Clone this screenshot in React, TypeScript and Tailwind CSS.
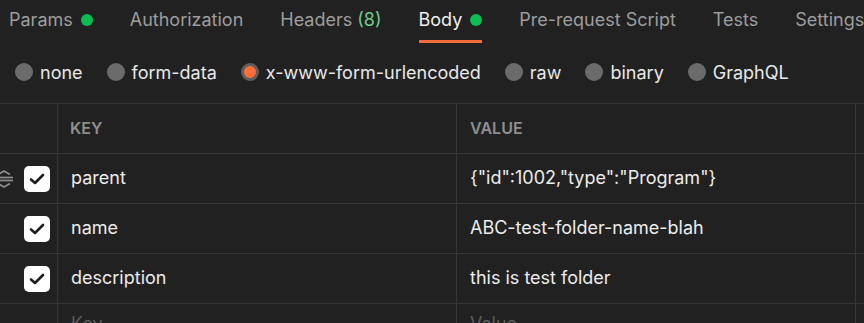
import { Fragment } from "react";

type Tab = {
  label: string;
  count?: string;
  dot?: boolean;
  active?: boolean;
};

const tabs: Tab[] = [
  { label: "Params", dot: true },
  { label: "Authorization" },
  { label: "Headers", count: "(8)" },
  { label: "Body", dot: true, active: true },
  { label: "Pre-request Script" },
  { label: "Tests" },
  { label: "Settings" },
];

const bodyTypes = ["none", "form-data", "x-www-form-urlencoded", "raw", "binary", "GraphQL"];

const rows = [
  { key: "parent", value: '{"id":1002,"type":"Program"}', handle: true },
  { key: "name", value: "ABC-test-folder-name-blah" },
  { key: "description", value: "this is test folder" },
];

function DragHandle() {
  return (
    <svg width="20" height="20" viewBox="0 0 20 20" className="absolute left-[-6px] top-1/2 -translate-y-1/2" fill="none" stroke="#8a8a8a" strokeWidth="1.8">
      <path d="M4 5.5 L10 2 L16 5.5" />
      <path d="M2 8.5 H19" />
      <path d="M2 11.5 H19" />
      <path d="M4 14.5 L10 18 L16 14.5" />
    </svg>
  );
}

function Checkbox() {
  return (
    <div className="flex h-[26px] w-[26px] items-center justify-center rounded-[5px] bg-white">
      <svg width="16" height="12" viewBox="0 0 16 12" fill="none" stroke="#1e1e1e" strokeWidth="2.6" strokeLinecap="round" strokeLinejoin="round">
        <path d="M2 6.5 L6 10 L14 2" />
      </svg>
    </div>
  );
}

export default function App() {
  return (
    <div
      className="h-[323px] w-[864px] overflow-hidden bg-[#212121] text-[18px]"
      style={{ fontFamily: "Inter, 'Noto Sans', sans-serif" }}
    >
      {/* Tabs */}
      <div className="flex h-[43px] gap-[37px] pl-[9px]">
        {tabs.map((t) => (
          <div
            key={t.label}
            className={`flex items-center gap-[8px] whitespace-nowrap border-b-[3px] pb-[1px] ${
              t.active ? "border-[#f26b3a] text-[#efefef]" : "border-transparent text-[#9d9d9d]"
            }`}
          >
            <span>{t.label}</span>
            {t.count && <span className="-ml-[3px] text-[#6fcb8d]">{t.count}</span>}
            {t.dot && <span className="h-[12px] w-[12px] rounded-full bg-[#0cbb52]" />}
          </div>
        ))}
      </div>

      {/* Body type radios */}
      <div className="flex h-[60px] items-center gap-[24px] pb-[2px] pl-[15px] text-[#e8e8e8]">
        {bodyTypes.map((b) => {
          const selected = b === "x-www-form-urlencoded";
          return (
            <div key={b} className="flex items-center gap-[7px] whitespace-nowrap">
              {selected ? (
                <span className="flex h-[18px] w-[18px] items-center justify-center rounded-full bg-[#5e5e5e]">
                  <span className="h-[12px] w-[12px] rounded-full bg-[#ff6c37]" />
                </span>
              ) : (
                <span className="h-[18px] w-[18px] rounded-full bg-[#6b6b6b]" />
              )}
              <span>{b}</span>
            </div>
          );
        })}
      </div>

      {/* Key/value table */}
      <div className="grid grid-cols-[58px_399px_399px_1fr] border-t border-[#363636]">
        <div className="h-[50px] border-b border-r border-[#363636]" />
        <div className="flex h-[50px] items-center border-b border-r border-[#363636] pb-[2px] pl-[12px] text-[16px] font-semibold text-[#8e8e8e]">
          KEY
        </div>
        <div className="flex h-[50px] items-center border-b border-r border-[#363636] pb-[2px] pl-[13px] text-[16px] font-semibold text-[#8e8e8e]">
          VALUE
        </div>
        <div className="h-[50px] border-b border-[#363636]" />

        {rows.map((r) => (
          <Fragment key={r.key}>
            <div className="relative flex h-[50px] items-center border-b border-r border-[#363636] pl-[24px]">
              {r.handle && <DragHandle />}
              <Checkbox />
            </div>
            <div className="flex h-[50px] items-center border-b border-r border-[#363636] pb-[2px] pl-[13px] text-[#ececec]">
              {r.key}
            </div>
            <div className="flex h-[50px] items-center border-b border-r border-[#363636] pb-[2px] pl-[13px] text-[#ececec]">
              {r.value}
            </div>
            <div className="h-[50px] border-b border-[#363636]" />
          </Fragment>
        ))}

        <div className="h-[50px] border-r border-[#363636]" />
        <div className="h-[50px] border-r border-[#363636] pl-[13px] pt-[6px] text-[#5c5c5c]">Key</div>
        <div className="h-[50px] border-r border-[#363636] pl-[13px] pt-[6px] text-[#5c5c5c]">Value</div>
        <div className="h-[50px]" />
      </div>
    </div>
  );
}
